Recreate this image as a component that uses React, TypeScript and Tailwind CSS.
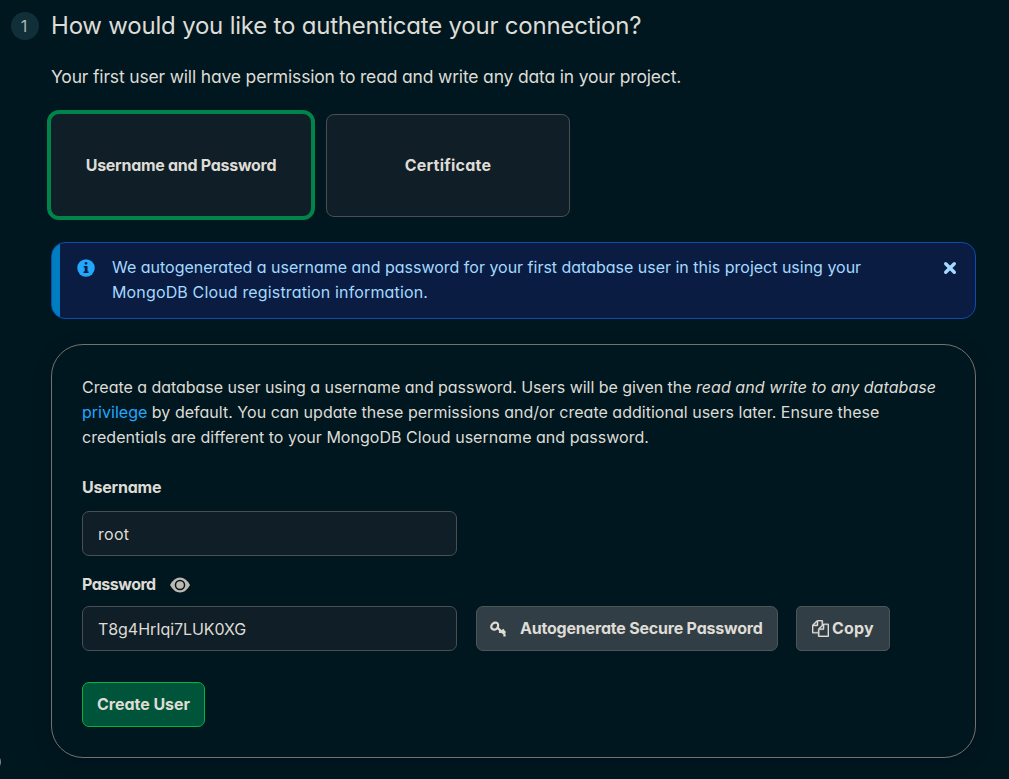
import React from "react";

const rootFont = "font-['Inter','Liberation_Sans',sans-serif] [font-feature-settings:'cv11','ss03']";

export default function App() {
  return (
    <div className={`relative h-[779px] w-[1009px] overflow-hidden bg-[#001720] pl-[51px] text-[#dedcd5] ${rootFont}`}>
      <div className="absolute -left-[12px] top-[754px] h-[16px] w-[13px] rounded-r-lg border-r border-[#85817a]" />
      <header className="-ml-10 flex h-[51px] items-center">
        <div className="flex size-[28px] items-center justify-center rounded-full bg-[#112f38] pr-[2px] text-[16px] text-[#afb6b4]">1</div>
        <h1 className="ml-3 whitespace-nowrap text-[24px] tracking-[-0.21px]">How would you like to authenticate your connection?</h1>
      </header>
      <p className="flex h-[50px] items-center whitespace-nowrap pt-[2px] text-[17.5px] tracking-[-0.17px]">Your first user will have permission to read and write any data in your project.</p>
      <div className="-ml-[4px] mt-[9px] flex items-center text-[16px] font-bold">
        <div className="flex h-[110px] w-[268px] items-center justify-center rounded-[12px] border-4 border-[#00844a] bg-[#101e27]"><span className="tracking-[-0.28px]">Username and Password</span></div>
        <div className="ml-[11px] flex h-[103px] w-[244px] items-center justify-center rounded-[8px] border border-[#494f53] bg-[#101e27]"><span className="tracking-[0.25px]">Certificate</span></div>
      </div>
      <section className="mt-[22px] flex h-[77px] w-[925px] overflow-hidden rounded-[14px] border border-[#0c4baf] bg-[#0b1c42] text-[#a3d9ff]">
        <div className="w-[8px] shrink-0 bg-[#007cc1]" />
        <svg className="ml-[16px] mt-[15px] size-[20px] shrink-0" viewBox="0 0 16 16"><circle cx="8" cy="8" r="7" fill="#22a7fb" /><path fill="#0b1c42" d="M9.1 4.2a1.1 1.1 0 1 1-2.2 0a1.1 1.1 0 0 1 2.2 0M6.2 6.3H9.2V10.8h.9v1.2H6v-1.2H7V7.5h-.8z" /></svg>
        <p className="ml-[16px] mt-[12px] w-[810px] shrink-0 whitespace-nowrap text-[16px] leading-[25px]"><span className="tracking-[-0.01px]">We autogenerated a username and password for your first database user in this project using your</span><br /><span className="tracking-[0.15px]">MongoDB Cloud registration information.</span></p>
        <svg className="ml-[18px] mt-[15px] size-[20px] shrink-0" viewBox="0 0 20 20" stroke="#a3d9ff" strokeWidth="3.4" strokeLinecap="round"><path d="M5.7 5.7l8.6 8.6m0-8.6l-8.6 8.6" /></svg>
      </section>
      <section className="mt-[25px] h-[414px] w-[925px] rounded-[32px] border border-[#75716b] px-[30px] pt-[30px] shadow-[0_4px_20px_-4px_rgba(0,5,15,0.35)]">
        <p className="whitespace-nowrap text-[16px] leading-[25px]">
          <span className="tracking-[-0.04px]">Create a database user using a username and password. Users will be given the <em className="tracking-[0.06px]">read and write to any database</em></span><br />
          <span className="tracking-[0.02px]"><a className="text-[#22a7fb]">privilege</a> by default. You can update these permissions and/or create additional users later. Ensure these</span><br />
          <span className="tracking-[0.03px]">credentials are different to your MongoDB Cloud username and password.</span>
        </p>
        <label className="mt-[25px] block text-[16px] font-bold leading-[25px] tracking-[-0.22px]">Username</label>
        <div className="mt-[11px] flex h-[45px] w-[375px] items-center rounded-[7px] border border-[#494f53] bg-[#101e27] px-[15px] text-[16px] tracking-[0.3px]">root</div>
        <div className="mt-[16px] flex h-[25px] items-center text-[16px] font-bold"><span className="w-[86px] pb-px tracking-[-0.5px]">Password</span><svg className="size-6" viewBox="0 0 24 24"><path fill="#bdb9b1" fillRule="evenodd" d="M2 12Q6 4.5 12 4.5T22 12Q18 19.5 12 19.5T2 12M12 6.7a5.3 5.3 0 1 0 0 10.6a5.3 5.3 0 0 0 0-10.6" /><circle cx="12" cy="12" r="3.8" fill="#bdb9b1" /></svg></div>
        <div className="mt-[9px] flex items-center text-[16px] font-bold">
          <div className="flex h-[45px] w-[375px] items-center rounded-[7px] border border-[#494f53] bg-[#101e27] px-[15px] font-normal tracking-[-0.06px]">T8g4HrIqi7LUK0XG</div>
          <button className="ml-[19px] flex h-[45px] w-[302px] items-center rounded-[7px] border border-[#4d5559] bg-[#323e45] pl-[11px]"><svg className="mr-[12px] size-5 shrink-0" viewBox="0 0 20 20" fill="none" stroke="#dedcd5" strokeWidth="2.2" strokeLinejoin="round"><path d="M3.2 8.2C3 5.4 5.6 3.2 8.3 3.7C10.2 4.2 10.4 5.9 9.9 7.7C9.3 10 7.4 11 5.2 10.4C4 10 3.3 9.3 3.2 8.2ZM9.3 8.6L16.5 15.2V17.6M12 11.2V14M13.8 12.6L16 10.6M15.2 14.2L17.4 12.4" /></svg><span className="whitespace-nowrap pb-px tracking-[-0.2px]">Autogenerate Secure Password</span></button>
          <button className="ml-[18px] flex h-[45px] w-[94px] items-center rounded-[5px] border border-[#4d5559] bg-[#323e45] pl-[15px]"><svg className="mr-[3px] size-[17px] shrink-0" viewBox="0 0 1792 1792"><path fill="#dedcd5" stroke="#dedcd5" strokeWidth="35" d="M1696 384q40 0 68 28t28 68v1216q0 40-28 68t-68 28h-960q-40 0-68-28t-28-68v-288h-544q-40 0-68-28t-28-68v-672q0-40 20-88t48-76l408-408q28-28 76-48t88-20h416q40 0 68 28t28 68v328q68-40 128-40h416zm-544 213l-299 299h299v-299zm-640-384l-299 299h299v-299zm196 647l316-316v-416h-384v416q0 40-28 68t-68 28h-416v640h512v-256q0-40 20-88t48-76zm956 804v-1152h-384v416q0 40-28 68t-68 28h-416v640h896z" /></svg><span className="pb-px tracking-[0.15px]">Copy</span></button>
        </div>
        <button className="mt-[31px] flex h-[45px] w-[123px] items-center rounded-[7px] border border-[#00b344] bg-[#005439] pl-[14px] text-[16px] font-bold"><span className="whitespace-nowrap pb-px tracking-[-0.03px]">Create User</span></button>
      </section>
    </div>
  );
}
